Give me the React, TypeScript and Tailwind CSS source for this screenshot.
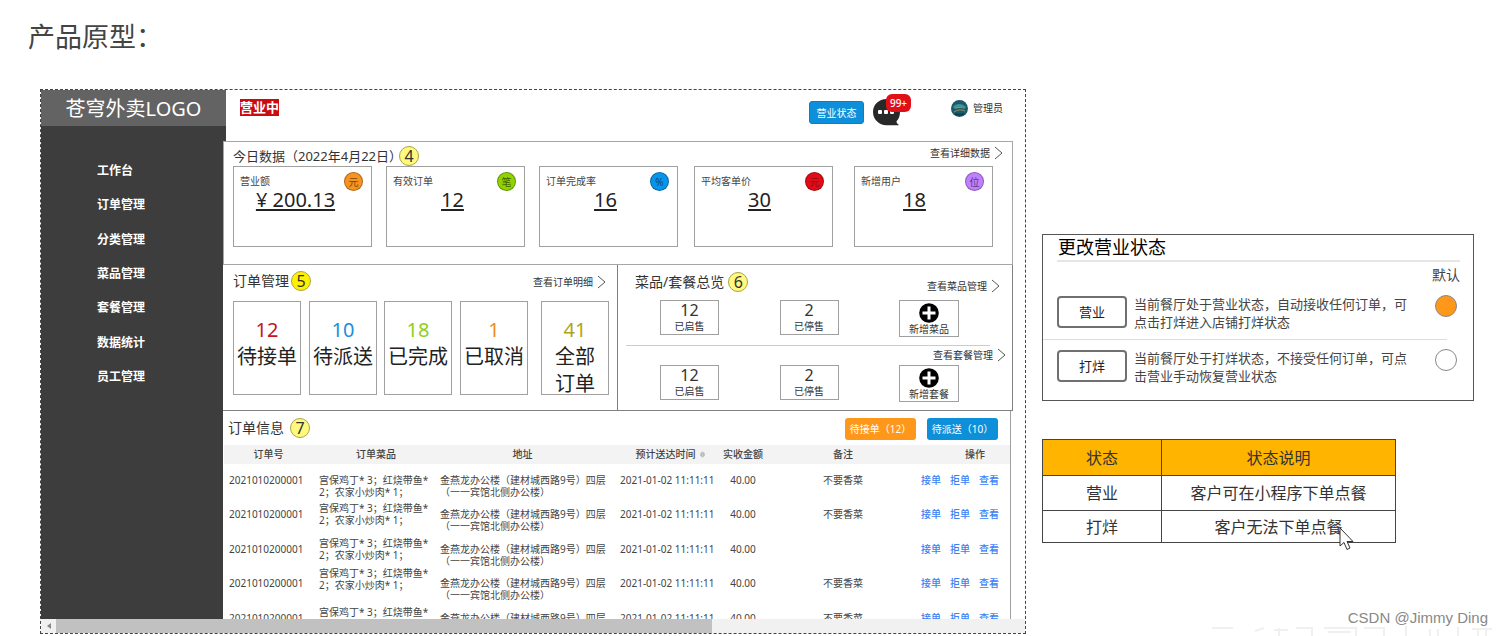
import { useState } from "react";

const menus = ["工作台", "订单管理", "分类管理", "菜品管理", "套餐管理", "数据统计", "员工管理"];

const todayCards = [
    { label: "营业额", value: "¥ 200.13", unit: "元", color: "bg-[#f7931e] text-[#7a4a10]", space: "mr-[14px]", pad: "pr-[14px]" },
    { label: "有效订单", value: "12", unit: "笔", color: "bg-[#8fd400] text-[#3f5d05]", space: "mr-[14px]", pad: "pr-[6px]" },
    { label: "订单完成率", value: "16", unit: "%", color: "bg-[#0795ec] text-[#0a4a78]", space: "mr-4", pad: "pr-[6px]" },
    { label: "平均客单价", value: "30", unit: "元", color: "bg-[#e30b17] text-[#8a1016]", space: "mr-[21px]", pad: "pr-2" },
    { label: "新增用户", value: "18", unit: "位", color: "bg-[#c080ff] text-[#5d3a80]", space: "", pad: "pr-[18px]" },
];

const orderTiles = [
    { num: 12, name: "待接单", color: "text-[#c4161c]", space: "mr-2" },
    { num: 10, name: "待派送", color: "text-[#1c8fdc]", space: "mr-[7px]" },
    { num: 18, name: "已完成", color: "text-[#8ccf1f]", space: "mr-2" },
    { num: 1, name: "已取消", color: "text-[#f08a24]", space: "mr-[13px]" },
    { num: 41, name: "全部订单", color: "text-[#b0a51a]", space: "" },
];

const orders = [
    { remark: "不要香菜", dishPad: "pt-2.5" },
    { remark: "不要香菜", dishPad: "pt-1" },
    { remark: "", dishPad: "pt-1" },
    { remark: "不要香菜", dishPad: "pt-0" },
    { remark: "不要香菜", dishPad: "pt-1" },
];

const statusOptions = [
    { id: "open", name: "营业", desc: "当前餐厅处于营业状态，自动接收任何订单，可点击打烊进入店铺打烊状态" },
    { id: "closed", name: "打烊", desc: "当前餐厅处于打烊状态，不接受任何订单，可点击营业手动恢复营业状态" },
];

const Mark = ({ n, bright }: { n: number; bright?: boolean }) => (
    <span className={`flex size-5 shrink-0 items-center justify-center rounded-full border border-[#a9a347] text-base leading-none text-[#333] ${bright ? "bg-[#fff200]" : "bg-[#fff97d]"}`}>{n}</span>
);

const MoreLink = ({ text }: { text: string }) => (
    <a href="#" className="flex h-4 items-center text-[10px] leading-none text-[#333]">
        {text}
        <svg className="ml-1 h-[14px] w-[9px]" viewBox="0 0 9 14" fill="none" stroke="#555">
            <path d="M1 1L8 7L1 13" />
        </svg>
    </a>
);

const TopBar = () => (
    <header className="flex flex-1 items-start bg-white pl-[14px] pr-[22px]">
        <span className="mt-[9px] h-[17px] bg-[#cc0a10] text-[13px] font-bold leading-[17px] text-white">营业中</span>
        <button className="ml-auto mt-[11px] h-[23px] w-[55px] rounded-[3px] border border-[#0a80c4] bg-[#0d8fd9] text-[10px] leading-none text-white">营业状态</button>
        <div className="relative ml-[9px] mt-2 w-[38px]">
            <svg className="h-7 w-[27px]" viewBox="0 0 27 28">
                <path d="M13.500 1C6 1 0 6.500 0 14s6 13 13.500 13.300h11.800c.5 0 .5-.6.1-.8-1.200-.7-1.900-1.700-1.900-3.200C25.800 21 27 17.800 27 14 27 6.500 21 1 13.500 1z" fill="#292929" />
                <g fill="#fff">
                    <rect x="5" y="12" width="4" height="4" rx="1" />
                    <rect x="11" y="12" width="4" height="4" rx="1" />
                    <rect x="17" y="12" width="4" height="4" rx="1" />
                </g>
            </svg>
            <span className="absolute right-0 -top-1 flex h-[18px] w-[25px] items-center justify-center rounded-md bg-[#e01019] text-[10px] font-medium leading-none text-white">99+</span>
        </div>
        <div className="ml-10 mt-[9px] flex h-[18px] items-center gap-[5px] text-[10px] text-[#333]">
            <svg className="size-[17px]" viewBox="0 0 17 17">
                <circle cx="8.500" cy="8.500" r="8.500" fill="#1b5a68" />
                <path d="M2 7c3-4 9-4 13 0l-2 2c-3-2-6-2-9 0z" fill="#3f9295" />
                <path d="M3 12c3-2 7-3 11-1M5 8l6-1" stroke="#9b9467" fill="none" />
                <path d="M4 14c3 1 6 1 9 0" stroke="#123c4b" strokeWidth="2" fill="none" />
            </svg>
            管理员
        </div>
    </header>
);

const TodayPanel = () => (
    <section className="h-[124px] border border-[#a6a6a6] bg-white pl-[9px] pr-[19px]">
        <div className="-mr-[10px] flex h-6 items-start justify-between">
            <h2 className="flex items-center pt-1 text-[13px] leading-5 text-[#333]">
                <span className="-mr-[3px]">今日数据（2022年4月22日）</span>
                <Mark n={4} />
            </h2>
            <div className="pt-[3px]"><MoreLink text="查看详细数据" /></div>
        </div>
        <div className="flex">
            {todayCards.map((c) => (
                <div key={c.label} className={`h-[81px] flex-1 border border-[#a0a0a0] ${c.space}`}>
                    <div className="flex items-start justify-between pl-[6px] pr-2 pt-[5px]">
                        <span className="text-[10px] leading-[18px] text-[#444]">{c.label}</span>
                        <span className={`flex size-[19px] items-center justify-center rounded-full border border-black/30 text-[10px] leading-none ${c.color}`}>{c.unit}</span>
                    </div>
                    <p className={`text-center text-xl leading-[18px] text-[#222] underline underline-offset-2 ${c.pad}`}>{c.value}</p>
                </div>
            ))}
        </div>
    </section>
);

const OrderPanel = () => (
    <section className="w-1/2 border-b border-r border-[#808080] pl-[10px] pr-2">
        <div className="flex h-9 items-start justify-between pr-[3px] pt-[6px]">
            <h2 className="flex h-5 items-center gap-[2px] text-sm text-[#333]">订单管理<Mark n={5} bright /></h2>
            <div className="pt-[3px]"><MoreLink text="查看订单明细" /></div>
        </div>
        <div className="flex items-start">
            {orderTiles.map((t) => (
                <div key={t.name} className={`flex h-[94px] flex-1 flex-col items-center border border-[#a0a0a0] pt-[15px] ${t.space}`}>
                    <span className={`text-xl leading-[26px] ${t.color}`}>{t.num}</span>
                    <span className={`text-center text-xl leading-[27px] text-[#222] ${t.name.length > 3 ? "w-10" : "whitespace-nowrap"}`}>{t.name}</span>
                </div>
            ))}
        </div>
    </section>
);

const DishRow = ({ add }: { add: string }) => (
    <div className="flex justify-between pl-[42px] pr-[53px] text-[#333]">
        {[["12", "已启售"], ["2", "已停售"]].map(([n, name]) => (
            <div key={name} className="flex h-[35px] w-[59px] flex-col items-center border border-[#a0a0a0]">
                <span className="text-base leading-[18px]">{n}</span>
                <span className="text-[10px] leading-[14px]">{name}</span>
            </div>
        ))}
        <button className="flex h-[37px] w-[60px] flex-col items-center border border-[#a0a0a0] pt-[2px]">
            <svg className="size-5 shrink-0" viewBox="0 0 20 20">
                <circle cx="10" cy="10" r="9.800" fill="#000" />
                <path d="M10 3.500V16.500M3.500 10H16.500" stroke="#fff" strokeWidth="3" />
            </svg>
            <span className="text-[10px] leading-3">{add}</span>
        </button>
    </div>
);

const DishPanel = () => (
    <section className="w-1/2 border-b border-r border-[#808080]">
        <div className="flex h-[35px] items-start justify-between pl-[17px] pr-3 pt-[7px]">
            <h2 className="flex h-5 items-center gap-[4px] text-sm text-[#333]">菜品/套餐总览<Mark n={6} /></h2>
            <div className="pt-[6px]"><MoreLink text="查看菜品管理" /></div>
        </div>
        <DishRow add="新增菜品" />
        <hr className="ml-2 mr-[22px] mt-2 border-[#ccc]" />
        <div className="flex h-[19px] justify-end pr-[6px] pt-px"><MoreLink text="查看套餐管理" /></div>
        <DishRow add="新增套餐" />
    </section>
);

const OrderTable = () => (
    <section className="mr-[2px] border-r border-[#a0a0a0]">
        <div className="flex h-[34px] items-center justify-between pl-[5px] pr-3">
            <h2 className="flex items-center gap-[6px] text-sm text-[#333]">订单信息 <Mark n={7} /></h2>
            <div className="flex gap-[11px] pt-[2px] text-[10px] leading-none text-white">
                <button className="h-[22px] w-[71px] rounded-[3px] bg-[#ff981a]">待接单（12）</button>
                <button className="h-[22px] w-[71px] rounded-[3px] bg-[#0d8fd9]">待派送（10）</button>
            </div>
        </div>
        <div className="h-[174px] overflow-hidden pl-px">
            <table className="w-full table-fixed text-left text-[10px] leading-[12px] text-[#444]">
                <thead className="bg-[#f3f3f3]">
                    <tr className="h-[19px] text-center">
                        <th className="w-[89px] pb-[2px] font-medium">订单号</th>
                        <th className="w-[126px] pb-[2px] font-medium">订单菜品</th>
                        <th className="w-[175px] pb-[2px] pr-2 font-medium">地址</th>
                        <th className="w-[104px] pb-[2px] pl-2 font-medium">
                            预计送达时间
                            <svg className="ml-1 inline h-[7px] w-[5px]" viewBox="0 0 5 7" fill="none" stroke="#aaa">
                                <path d="M.5 3L2.500 .8L4.500 3zM.5 4L2.500 6.200L4.500 4z" />
                            </svg>
                        </th>
                        <th className="w-[50px] pb-[2px] font-medium">实收金额</th>
                        <th className="pb-[2px] font-medium">备注</th>
                        <th className="w-[92px] pb-[2px] pl-[22px] font-medium">操作</th>
                    </tr>
                </thead>
                <tbody>
                    {orders.map((o, i) => (
                        <tr key={i} className="h-[34px] align-top even:h-[35px]">
                            <td className="pl-[5px] pt-2.5">2021010200001</td>
                            <td className={`whitespace-nowrap pl-[6px] ${o.dishPad}`}>宫保鸡丁* 3；红烧带鱼*<br />2；农家小炒肉* 1；</td>
                            <td className="whitespace-nowrap pl-px pt-2.5">金燕龙办公楼（建材城西路9号）四层<br />（一一宾馆北侧办公楼）</td>
                            <td className="whitespace-nowrap pl-[6px] pt-2.5">2021-01-02 11:11:11</td>
                            <td className="pt-2.5 text-center">40.00</td>
                            <td className="pt-2.5 text-center">{o.remark}</td>
                            <td className="pt-2.5 text-[#3b82f6]">
                                <div className="flex gap-[9px] pl-[3px] font-medium">
                                    <a href="#">接单</a>
                                    <a href="#">拒单</a>
                                    <a href="#">查看</a>
                                </div>
                            </td>
                        </tr>
                    ))}
                </tbody>
            </table>
        </div>
    </section>
);

const StatusBox = () => {
    const [status, setStatus] = useState("open");

    return <section className="border border-[#555] pb-[15px]">
        <h2 className="ml-[14px] mr-[13px] border-b-2 border-[#e6e6e6] pl-px text-lg leading-[25px] text-black">更改营业状态</h2>
        <p className="pr-[13px] text-right text-sm leading-[26px] text-[#444]">默认</p>
        {statusOptions.map((s, i) => (
            <div key={s.id}>
                {i > 0 && <hr className="mb-[9px] mr-[26px] border-[#ddd]" />}
                <div className={`flex items-start pl-[14px] pr-4 ${i === 0 ? "pb-2 pt-[7px]" : ""}`}>
                    <button onClick={() => setStatus(s.id)} className="mt-px h-8 w-[70px] shrink-0 rounded-[4px] border-2 border-[#707070] text-[13px] leading-none text-[#222]">{s.name}</button>
                    <label htmlFor={s.id} className="ml-[7px] w-[282px] text-[13px] leading-[18px] text-[#444]">{s.desc}</label>
                    <input
                        id={s.id}
                        type="radio"
                        name="status"
                        checked={status === s.id}
                        onChange={() => setStatus(s.id)}
                        className="ml-auto size-[22px] appearance-none rounded-full border border-[#888] bg-white checked:bg-[#ff981a]"
                    />
                </div>
            </div>
        ))}
    </section>;
};

const StatusTable = () => (
    <table className="w-[354px] table-fixed border border-[#333] text-center text-base text-[#333]">
        <thead className="bg-[#ffb400]">
            <tr className="h-9">
                <th className="w-[119px] border border-[#444] font-normal">状态</th>
                <th className="border border-[#444] font-normal">状态说明</th>
            </tr>
        </thead>
        <tbody>
            <tr className="h-[35px]">
                <td className="border border-[#444]">营业</td>
                <td className="border border-[#444]">客户可在小程序下单点餐</td>
            </tr>
            <tr className="h-8">
                <td className="border border-[#444]">打烊</td>
                <td className="border border-[#444]">客户无法下单点餐</td>
            </tr>
        </tbody>
    </table>
);

export default function App() {
    return <div className="relative overflow-hidden bg-white pb-[2px] font-['Noto_Sans','Noto_Sans_CJK_SC',sans-serif]">
        <h1 className="pl-7 pt-4 text-[27px] leading-[41px] text-[#444]">产品原型：</h1>

        <div className="mt-8 flex items-start gap-4 pl-10 pr-7">
            <div className="min-w-0 flex-1 border border-dashed border-[#444]">
                <div className="flex h-[51px]">
                    <div className="w-[185px] bg-[#3d3d3d]">
                        <div className="h-9 bg-[#636363] text-center text-xl leading-[38px] text-white">苍穹外卖LOGO</div>
                    </div>
                    <TopBar />
                </div>
                <div className="flex">
                    <nav className="w-[182px] shrink-0 bg-[#3d3d3d] pl-14 pt-[13px]">
                        <ul className="flex h-[240px] flex-col justify-between text-xs font-bold leading-[34px] text-white">
                            {menus.map((m) => <li key={m}><a href="#">{m}</a></li>)}
                        </ul>
                    </nav>
                    <main className="mr-3 min-w-0 flex-1">
                        <TodayPanel />
                        <div className="flex h-[146px]">
                            <OrderPanel />
                            <DishPanel />
                        </div>
                        <OrderTable />
                    </main>
                </div>
                <div className="flex h-[14px] bg-[#f1f1f1]">
                    <div className="flex w-[15px] items-center justify-center">
                        <svg className="h-[6px] w-1" viewBox="0 0 4 6"><path d="M4 0L0 3L4 6z" fill="#888" /></svg>
                    </div>
                    <div className="w-2/3 bg-[#c1c1c1]" />
                </div>
            </div>

            <aside className="mt-[145px] w-[432px] shrink-0">
                <StatusBox />
                <div className="relative mt-[38px] w-[354px]">
                    <StatusTable />
                    <svg className="absolute -bottom-2 right-[42px] h-6 w-[15px]" viewBox="0 0 15 24">
                        <path d="M1 1V19L5 15.500L8 22.500L11 21L8 14.500H14z" fill="#fff" stroke="#333" />
                    </svg>
                </div>
            </aside>
        </div>

        <svg className="absolute bottom-0 right-1 h-3 w-[290px]" viewBox="0 0 290 12" fill="none" stroke="#f0f0f0" strokeWidth="2">
            <path d="M4 4H25M47 7L56 4M66 6H80M71 4V12M88 4H104V12M116 4H148V12M120 8H143M156 4H176V12M198 2V12M222 5V12M230 5V12M250 3V12M264 5H284M270 5V12M278 5V12" />
        </svg>
        <p className="absolute bottom-2 right-[14px] font-['Liberation_Sans',sans-serif] text-[15px] leading-5 text-[#888]">CSDN @Jimmy Ding</p>
    </div>
}
